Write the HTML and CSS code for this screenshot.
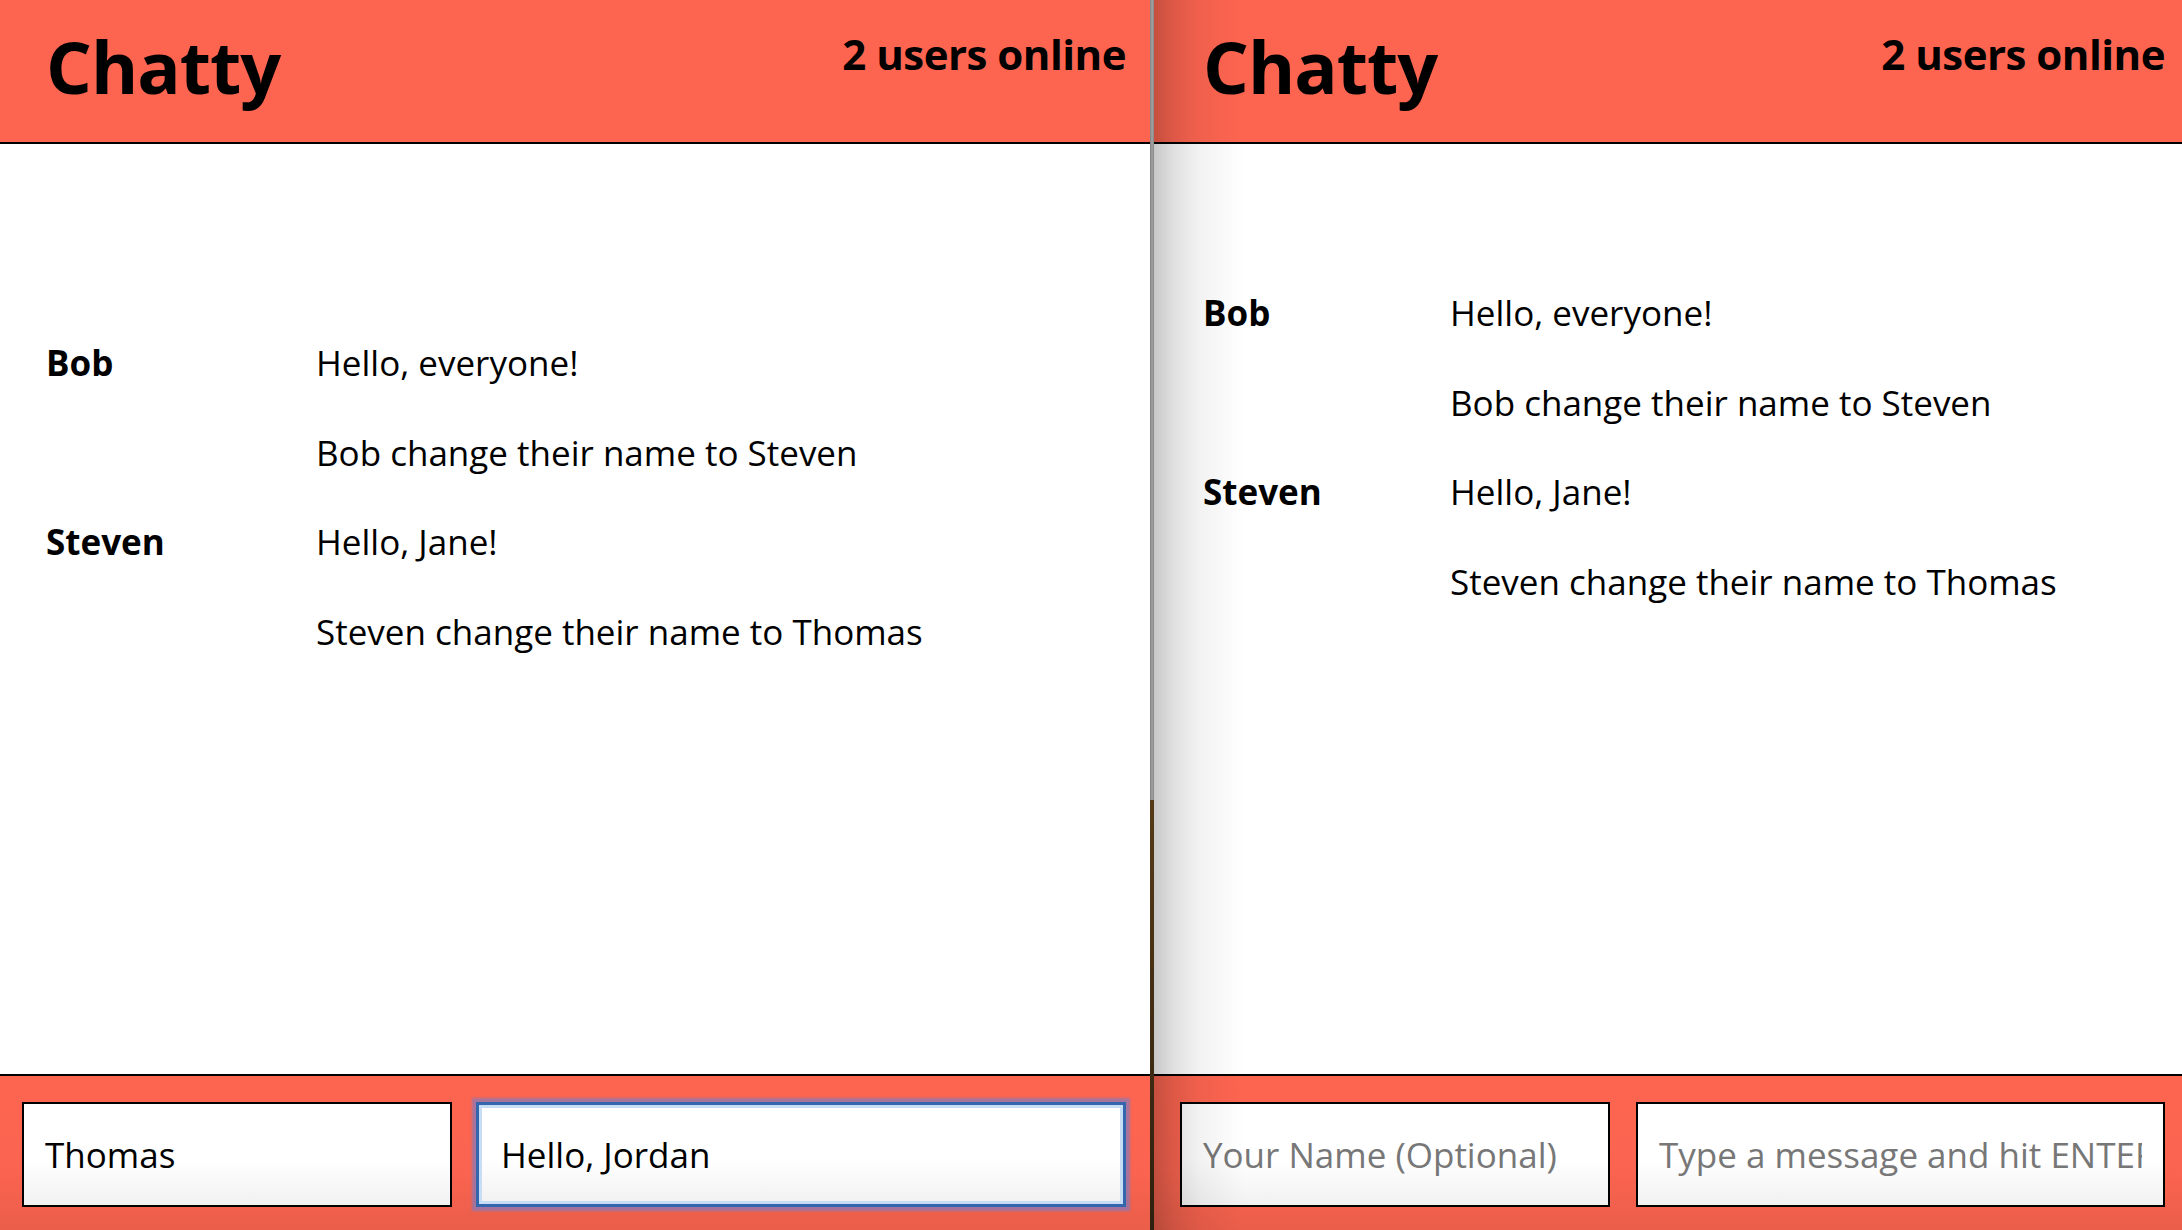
FILE: index.html
```html
<!DOCTYPE html>
<html lang="en">
<head>
<meta charset="utf-8">
<title>Chatty</title>
<link rel="stylesheet" href="styles.css">
</head>
<body>
<div class="app">
  <section class="panel panel--left">
    <header class="topbar">
      <h1 class="brand">Chatty</h1>
      <span class="online">2 users online</span>
    </header>
    <main class="messages">
      <div class="message"><span class="username">Bob</span><span class="content">Hello, everyone!</span></div>
      <div class="message"><span class="username"></span><span class="content">Bob change their name to Steven</span></div>
      <div class="message"><span class="username">Steven</span><span class="content">Hello, Jane!</span></div>
      <div class="message"><span class="username"></span><span class="content">Steven change their name to Thomas</span></div>
    </main>
    <footer class="composer">
      <input class="field field--name" type="text" value="Thomas" placeholder="Your Name (Optional)">
      <input class="field field--msg field--focus" type="text" value="Hello, Jordan" placeholder="Type a message and hit ENTER">
    </footer>
  </section>
  <div class="divider"></div>
  <section class="panel panel--right">
    <header class="topbar">
      <h1 class="brand">Chatty</h1>
      <span class="online">2 users online</span>
    </header>
    <main class="messages">
      <div class="message"><span class="username">Bob</span><span class="content">Hello, everyone!</span></div>
      <div class="message"><span class="username"></span><span class="content">Bob change their name to Steven</span></div>
      <div class="message"><span class="username">Steven</span><span class="content">Hello, Jane!</span></div>
      <div class="message"><span class="username"></span><span class="content">Steven change their name to Thomas</span></div>
    </main>
    <footer class="composer">
      <input class="field field--name" type="text" placeholder="Your Name (Optional)">
      <input class="field field--msg" type="text" placeholder="Type a message and hit ENTER">
    </footer>
  </section>
</div>
</body>
</html>
```

FILE: styles.css
```css
* { box-sizing: border-box; }

html, body {
  margin: 0;
  padding: 0;
  height: 1230px;
  overflow: hidden;
  background: #fff;
}

body {
  font-family: "Open Sans", "Noto Sans", sans-serif;
  color: #000;
}

.app {
  display: flex;
  height: 1230px;
}

.panel {
  display: flex;
  flex-direction: column;
  height: 1230px;
  position: relative;
  background: #fff;
}

.panel--left {
  width: 1150px;
  --pad-l: 46px;
  --pad-r: 24px;
  --user-w: 270px;
  --msg-top: 195px;
  --foot-l: 22px;
  --foot-r: 24px;
  --foot-gap: 24px;
}

.panel--right {
  flex: 1;
  --pad-l: 49px;
  --pad-r: 17px;
  --user-w: 247px;
  --msg-top: 145px;
  --foot-l: 26px;
  --foot-r: 17px;
  --foot-gap: 26px;
}

.panel--right::before {
  content: "";
  position: absolute;
  left: 0;
  top: 0;
  bottom: 0;
  width: 90px;
  background: linear-gradient(to right, rgba(0,0,0,0.22) 0, rgba(0,0,0,0.12) 20px, rgba(0,0,0,0.05) 45px, rgba(0,0,0,0) 90px);
  pointer-events: none;
  z-index: 5;
}

.divider {
  width: 4px;
  flex: none;
  background:
    linear-gradient(to right, #7c7c7c 0, #a4a4a4 50%, #858585 100%) top / 100% 800px no-repeat,
    linear-gradient(to bottom, #6b4a1e 0, #3a2a14 30%, #5c3e18 60%, #2e2010 100%);
}

.topbar {
  height: 144px;
  flex: none;
  background: #fd6550;
  border-bottom: 2px solid #000;
  display: flex;
  justify-content: space-between;
  align-items: flex-start;
  padding: 30px var(--pad-r) 0 var(--pad-l);
}

.brand {
  margin: 0;
  font-size: 72px;
  line-height: 72px;
  font-weight: 700;
  letter-spacing: -1px;
}

.online {
  margin-top: 3px;
  font-size: 42px;
  line-height: 42px;
  font-weight: 700;
  letter-spacing: -0.5px;
}

.messages {
  flex: 1;
  display: flex;
  flex-direction: column;
  gap: 41.5px;
  padding: var(--msg-top) var(--pad-r) 0 var(--pad-l);
}

.message {
  display: flex;
  font-size: 35px;
  line-height: 48px;
}

.username {
  width: var(--user-w);
  flex: none;
  font-weight: 700;
}

.content {
  font-weight: 400;
}

.composer {
  height: 156px;
  flex: none;
  border-top: 2px solid #000;
  background: linear-gradient(to bottom, #fd6550 0, #fb6450 60%, #ea5e4a 100%);
  display: flex;
  align-items: flex-start;
  gap: var(--foot-gap);
  padding: 26px var(--foot-r) 0 var(--foot-l);
}

.field {
  height: 105px;
  border: 2px solid #000;
  border-radius: 0;
  padding: 0 21px;
  font-family: "Open Sans", "Noto Sans", sans-serif;
  font-size: 35px;
  color: #000;
  background: linear-gradient(to bottom, #ffffff 0, #ffffff 55%, #f1f1f1 100%);
  outline: none;
  margin: 0;
}

.field::placeholder {
  color: #777;
  opacity: 1;
}

.field--name {
  width: 430px;
  flex: none;
}

.field--msg {
  flex: 1;
  min-width: 0;
}

.field--focus {
  border: 3px solid #3466ad;
  padding: 0 22px;
  box-shadow: inset 0 0 0 3px #c7dcf5, 0 0 2px 4px rgba(96, 130, 220, 0.55);
}
```
